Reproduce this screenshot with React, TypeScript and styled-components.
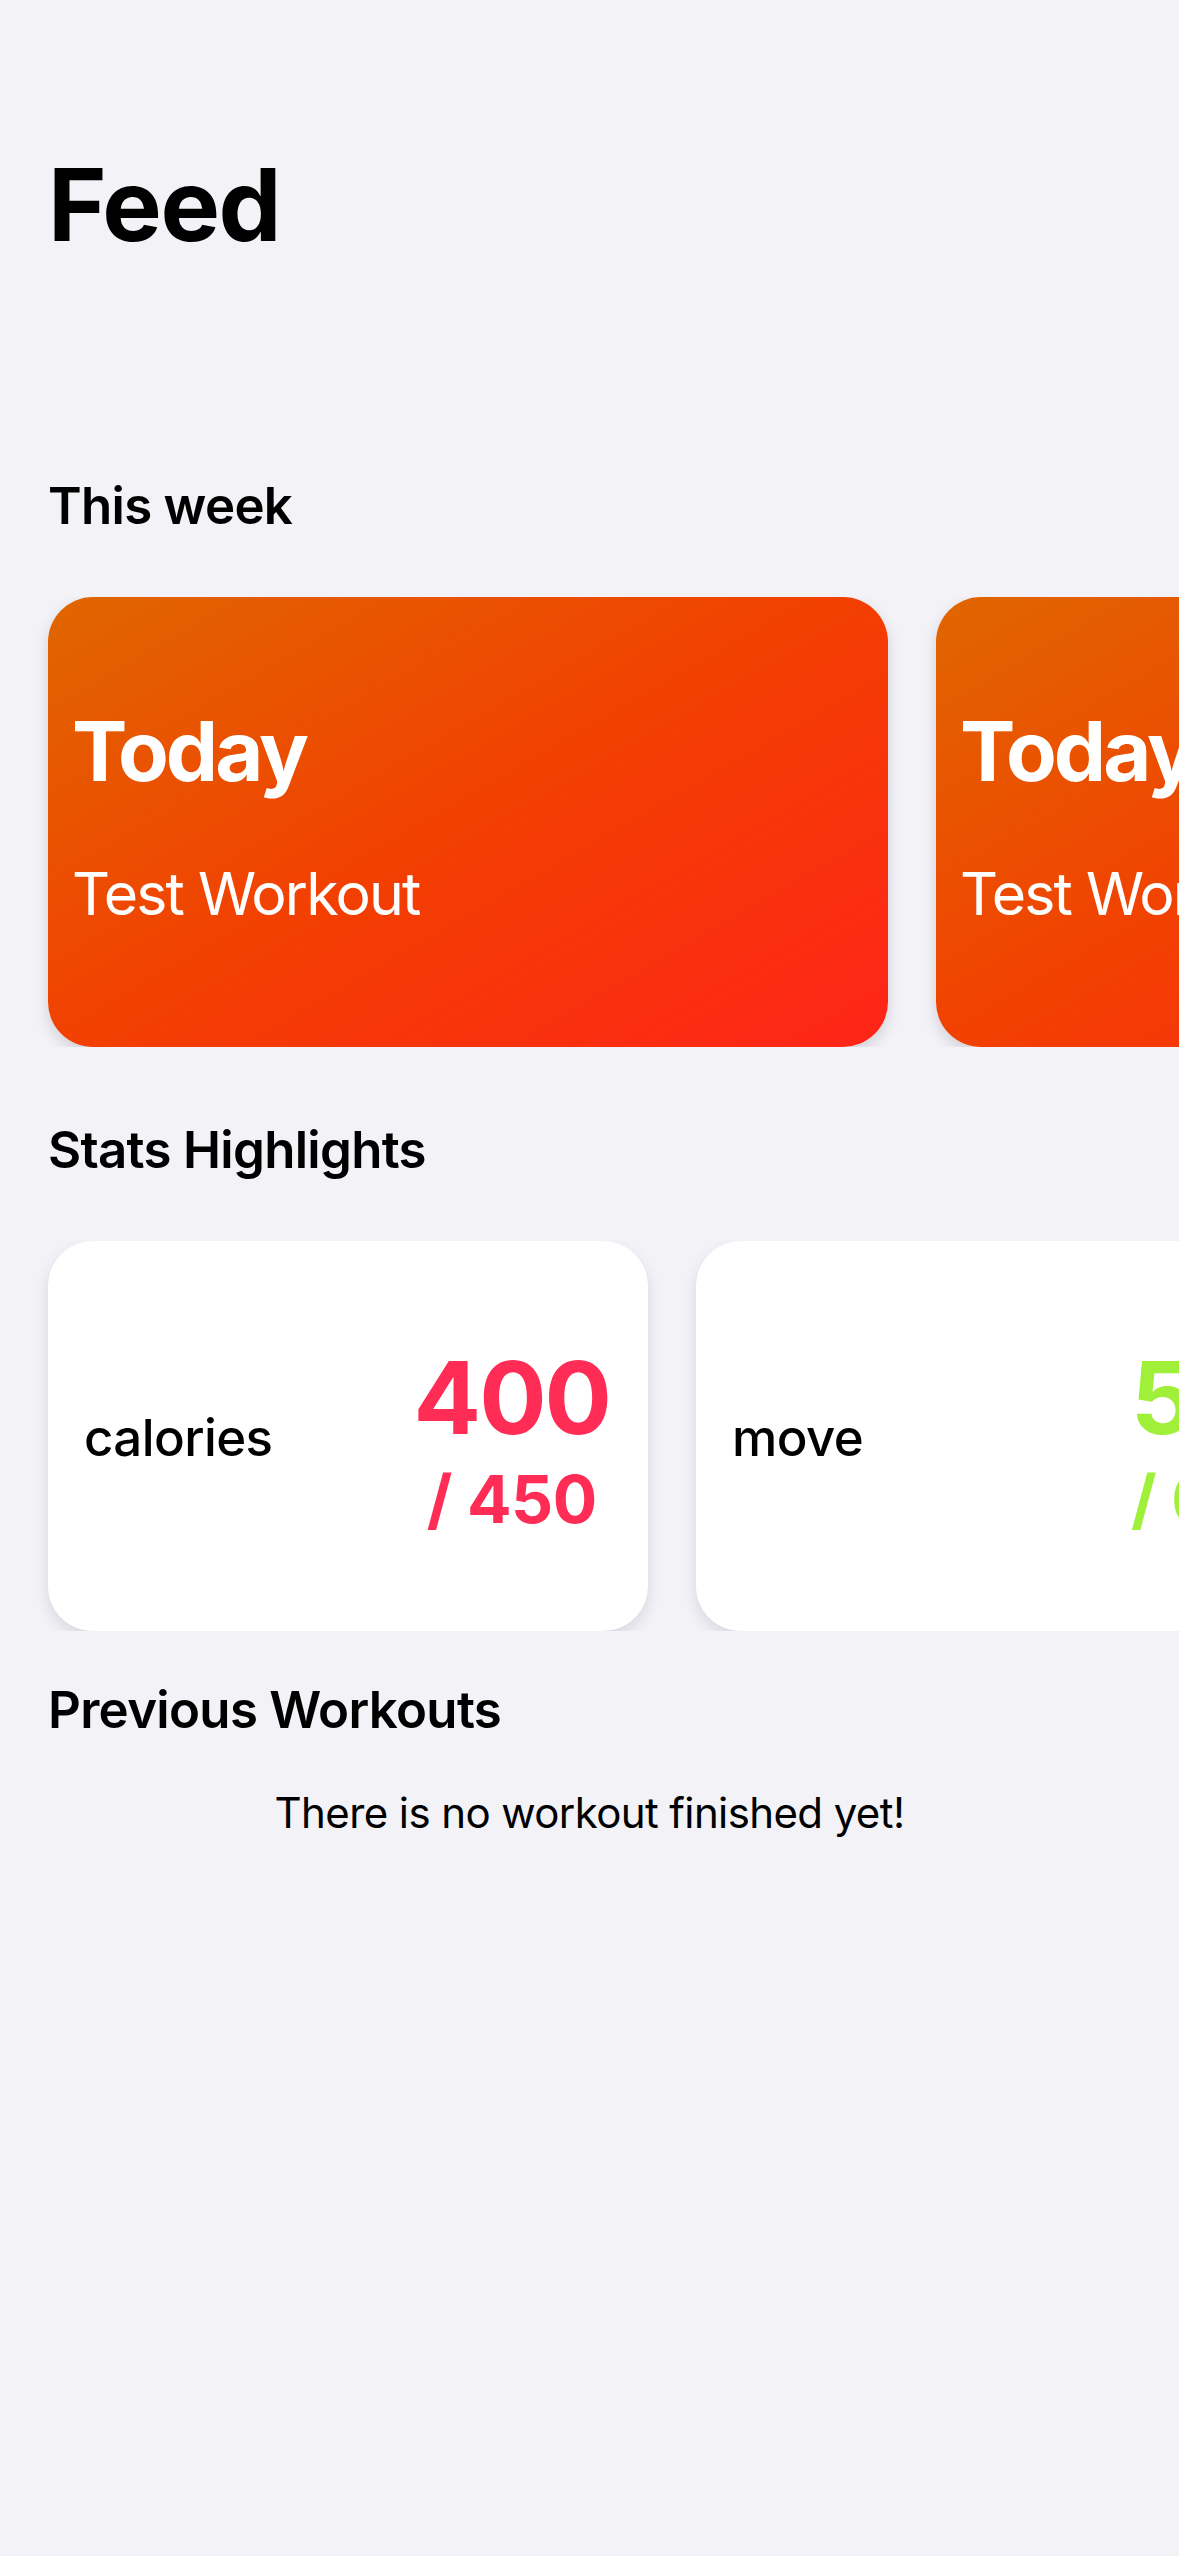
import React from "react"
import styled, { createGlobalStyle } from "styled-components"

type Workout = {
  day: string
  title: string
}

type Stat = {
  label: string
  value: number
  goal: number
  color: string
}

const workouts: Workout[] = [
  { day: "Today", title: "Test Workout" },
  { day: "Today", title: "Test Workout" },
]

const stats: Stat[] = [
  { label: "calories", value: 400, goal: 450, color: "#FF2D55" },
  { label: "move", value: 50, goal: 60, color: "#A0F03A" },
]

const GlobalStyle = createGlobalStyle`
  html, body {
    margin: 0;
    padding: 0;
    background: #F2F2F7;
  }
  body {
    font-family: Inter, "Noto Sans", "Liberation Sans", sans-serif;
    color: #000;
    -webkit-font-smoothing: antialiased;
  }
  * { box-sizing: border-box; }
`

const Screen = styled.main`
  width: 1179px;
  min-height: 2556px;
  padding-top: 145px;
  background: #F2F2F7;
  overflow: hidden;
`

const LargeTitle = styled.h1`
  margin: 0;
  padding: 0 48px;
  font-size: 100px;
  line-height: 120px;
  font-weight: 700;
  letter-spacing: -1.5px;
`

const SectionTitle = styled.h2<{ $top: number }>`
  margin: ${(p) => p.$top}px 0 0;
  padding: 0 48px;
  font-size: 51px;
  line-height: 60px;
  font-weight: 600;
  letter-spacing: -0.7px;
`

const Carousel = styled.div`
  display: flex;
  gap: 48px;
  margin-top: 61px;
  padding: 0 48px;
  overflow: hidden;

  & > * {
    flex: 0 0 auto;
  }
`

const WorkoutCard = styled.div`
  width: 840px;
  height: 450px;
  border-radius: 45px;
  padding: 104px 24px 0;
  display: flex;
  flex-direction: column;
  gap: 58px;
  color: #fff;
  background: linear-gradient(150deg, #E06600 0%, #F33E02 52%, #FF2419 100%);
  box-shadow: 0 6px 14px rgba(60, 60, 80, 0.18);
`

const CardDay = styled.div`
  font-size: 83px;
  line-height: 100px;
  font-weight: 700;
  letter-spacing: -3px;
`

const CardTitle = styled.div`
  font-size: 59px;
  line-height: 70px;
  font-weight: 400;
  letter-spacing: -1.8px;
`

const StatCard = styled.div`
  width: 600px;
  height: 390px;
  border-radius: 45px;
  background: #fff;
  padding: 0 38px 0 36px;
  display: flex;
  align-items: center;
  justify-content: space-between;
  box-shadow: 0 6px 14px rgba(60, 60, 80, 0.14);
`

const StatLabel = styled.div`
  font-size: 51px;
  line-height: 60px;
  font-weight: 500;
  letter-spacing: -0.6px;
  margin-top: 4px;
`

const StatNumbers = styled.div<{ $color: string }>`
  display: flex;
  flex-direction: column;
  align-items: center;
  gap: 8px;
  margin-top: 8px;
  color: ${(p) => p.$color};
  font-weight: 700;
`

const StatValue = styled.div`
  font-size: 100px;
  line-height: 110px;
  letter-spacing: -2px;
`

const StatGoal = styled.div`
  font-size: 66px;
  line-height: 76px;
  letter-spacing: -0.5px;
`

const EmptyText = styled.p`
  margin: 48px 0 0;
  text-align: center;
  font-size: 42px;
  line-height: 50px;
  font-weight: 400;
  letter-spacing: -0.6px;
`

export default function App() {
  return (
    <>
      <GlobalStyle />
      <Screen>
        <LargeTitle>Feed</LargeTitle>

        <SectionTitle $top={211}>This week</SectionTitle>
        <Carousel>
          {workouts.map((w, i) => (
            <WorkoutCard key={i}>
              <CardDay>{w.day}</CardDay>
              <CardTitle>{w.title}</CardTitle>
            </WorkoutCard>
          ))}
        </Carousel>

        <SectionTitle $top={73}>Stats Highlights</SectionTitle>
        <Carousel>
          {stats.map((s) => (
            <StatCard key={s.label}>
              <StatLabel>{s.label}</StatLabel>
              <StatNumbers $color={s.color}>
                <StatValue>{s.value}</StatValue>
                <StatGoal>/ {s.goal}</StatGoal>
              </StatNumbers>
            </StatCard>
          ))}
        </Carousel>

        <SectionTitle $top={49}>Previous Workouts</SectionTitle>
        <EmptyText>There is no workout finished yet!</EmptyText>
      </Screen>
    </>
  )
}
